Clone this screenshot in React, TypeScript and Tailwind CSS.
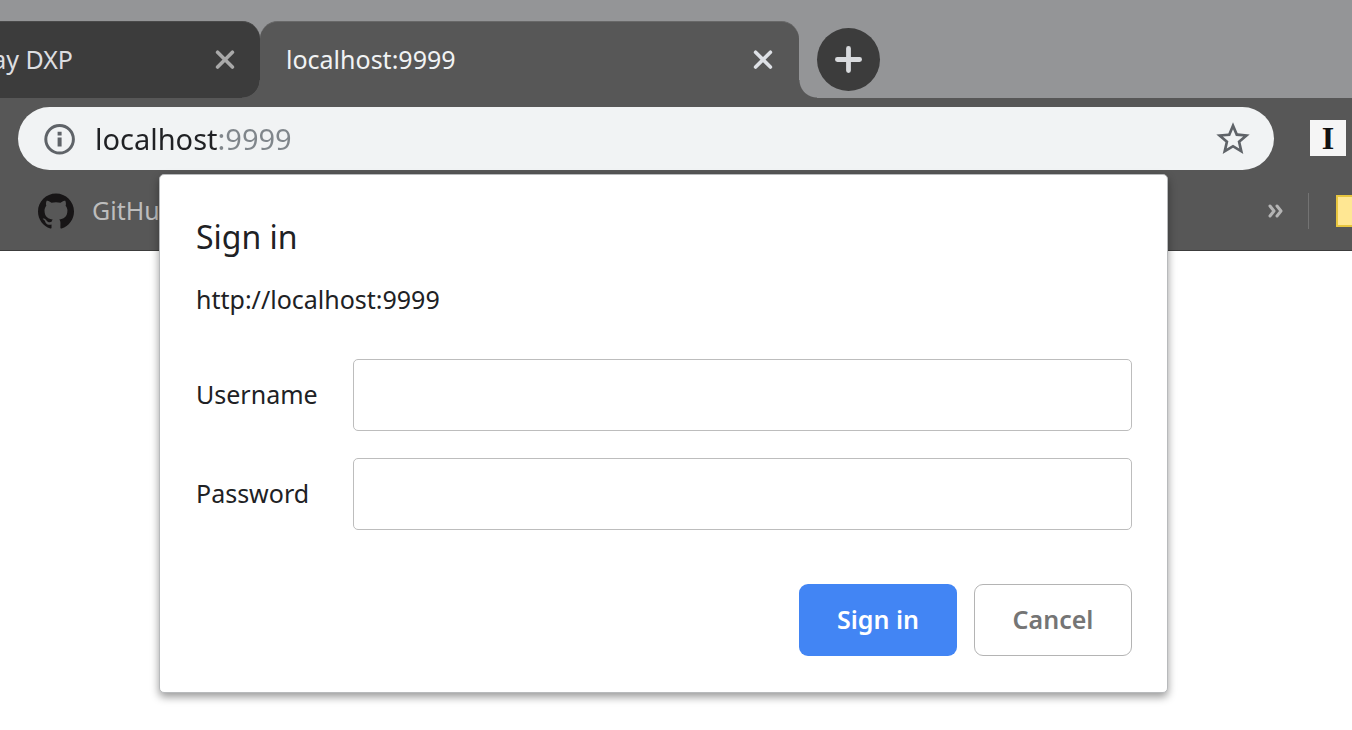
import { useState } from "react";
import { MdStarBorder } from "react-icons/md";
import { SiGithub } from "react-icons/si";

function CloseIcon() {
  return (
    <svg viewBox="0 0 20 20" className="size-5" fill="none" stroke="currentColor" strokeWidth="3.6" strokeLinecap="round">
      <path d="M2.6 2.2 17.4 17M17.4 2.2 2.6 17" />
    </svg>
  );
}

function InfoIcon() {
  return (
    <svg viewBox="0 0 32 32" className="size-8" fill="none">
      <circle cx="15.6" cy="16.2" r="13.8" stroke="currentColor" strokeWidth="3" />
      <path d="M13.6 14.6h4V23.6h-4zM13.6 8.8h4v3.6h-4z" fill="currentColor" />
    </svg>
  );
}

function TabStrip() {
  return (
    <div className="flex h-[98px] bg-[#949597] pt-[21px] text-[25px]">
      <div className="flex w-[260px] shrink-0 items-center justify-between rounded-r-[18px] border-t border-[#4a4a4a] bg-[#3c3c3c] pr-[25px]">
        <div className="flex w-[73px] justify-end overflow-hidden whitespace-nowrap text-[#dcdee1]">
          <span className="shrink-0">ay DXP</span>
        </div>
        <button type="button" aria-label="Close tab" className="text-[#a9a9a9]">
          <CloseIcon />
        </button>
      </div>
      <div className="relative flex min-w-0 max-w-[539px] flex-1 items-center justify-between rounded-t-[18px] border-t border-[#686868] bg-[#575757] px-[26px] before:absolute before:bottom-0 before:-left-[18px] before:size-[18px] before:bg-[radial-gradient(circle_at_0_0,transparent_17px,#575757_18px)] after:absolute after:-right-[18px] after:bottom-0 after:size-[18px] after:bg-[radial-gradient(circle_at_100%_0,transparent_17px,#575757_18px)]">
        <span className="text-[#f1f3f4]">localhost:9999</span>
        <button type="button" aria-label="Close tab" className="text-[#dee1e6]">
          <CloseIcon />
        </button>
      </div>
      <button
        type="button"
        aria-label="New tab"
        className="mt-[7px] ml-[18px] flex size-[63px] shrink-0 items-center justify-center rounded-full bg-[#3c3c3c] text-[#d8dadd]"
      >
        <svg viewBox="0 0 27 27" className="size-[27px]" fill="none" stroke="currentColor" strokeWidth="4.8" strokeLinecap="round">
          <path d="M13.5 2.4V24.6M2.4 13.5H24.6" />
        </svg>
      </button>
    </div>
  );
}

function Toolbar() {
  const [url, setUrl] = useState("localhost:9999");
  return (
    <div className="flex items-center bg-[#575757] pt-[9px] pr-[6px] pl-[18px]">
      <div className="flex h-[63px] min-w-0 flex-1 items-center rounded-full bg-[#f1f3f4] pr-[21px] pl-[26px] text-[#5f6368]">
        <button type="button" aria-label="View site information">
          <InfoIcon />
        </button>
        <input
          aria-label="Address"
          value={url}
          onChange={(e) => setUrl(e.target.value)}
          className="ml-[19px] h-full min-w-0 flex-1 bg-[linear-gradient(90deg,#202124_123px,#80868b_123px)] bg-clip-text text-[29px] text-transparent caret-[#202124] outline-none"
        />
        <button type="button" aria-label="Bookmark this page">
          <MdStarBorder className="size-10" />
        </button>
      </div>
      <button
        type="button"
        className="mb-0.5 ml-9 flex size-9 shrink-0 items-center justify-center bg-[#f5f5f5] font-['Liberation_Serif',serif] text-[32px] leading-9 font-bold text-[#111111]"
      >
        I
      </button>
    </div>
  );
}

function BookmarkBar() {
  return (
    <div className="flex h-[81px] items-center border-b border-[#3c3c3c] bg-[#575757] pt-0.5 pl-[38px] text-[25px] text-[#bdbdbd]">
      <a href="#github" className="flex items-center gap-[18px]">
        <SiGithub className="size-9 text-[#171516]" />
        GitHub
      </a>
      <button type="button" aria-label="More bookmarks" className="mr-[25px] ml-auto text-[#b4b4b4]">
        <svg viewBox="0 0 15 14" className="h-[14px] w-[15px]" fill="none" stroke="currentColor" strokeWidth="3" strokeLinecap="round" strokeLinejoin="round">
          <path d="M2 2 6 7 2 12M9 2 13 7 9 12" />
        </svg>
      </button>
      <div className="h-9 w-px bg-[#737373]" />
      <div className="ml-[27px] h-8 w-4 border-2 border-r-0 border-[#e8c63f] bg-[#ffe793]" />
    </div>
  );
}

function SignInDialog() {
  const label = "w-[157px] pb-0.5";
  const input = "h-[72px] min-w-0 flex-1 rounded-[5px] border border-[#bdbdbd] bg-white px-4 outline-none";
  return (
    <form
      role="dialog"
      aria-labelledby="dialog-title"
      onSubmit={(e) => e.preventDefault()}
      className="absolute top-[174px] right-[184px] left-[159px] rounded-[5px] border border-[#b8babc] bg-white pt-[38px] pr-[35px] pb-9 pl-9 text-[25px] leading-9 text-[#202124] shadow-[0_4px_9px_rgba(0,0,0,0.4)]"
    >
      <h1 id="dialog-title" className="text-[32px] leading-12">
        Sign in
      </h1>
      <p className="mt-5">http://localhost:9999</p>
      <div className="mt-[42px] flex items-center">
        <label htmlFor="username" className={label}>
          Username
        </label>
        <input id="username" type="text" className={input} />
      </div>
      <div className="mt-[27px] flex items-center">
        <label htmlFor="password" className={label}>
          Password
        </label>
        <input id="password" type="password" className={input} />
      </div>
      <div className="mt-[54px] flex justify-end gap-[17px] font-semibold">
        <button type="submit" className="h-[72px] w-[158px] rounded-[9px] bg-[#4285f4] pb-0.5 text-white">
          Sign in
        </button>
        <button type="button" className="h-[72px] w-[158px] rounded-[9px] border border-[#b4b4b4] pb-0.5 text-[#757575]">
          Cancel
        </button>
      </div>
    </form>
  );
}

export default function App() {
  return (
    <div className="relative min-h-screen bg-white font-['Noto_Sans','Open_Sans',sans-serif]">
      <header>
        <TabStrip />
        <Toolbar />
        <BookmarkBar />
      </header>
      <SignInDialog />
    </div>
  );
}
